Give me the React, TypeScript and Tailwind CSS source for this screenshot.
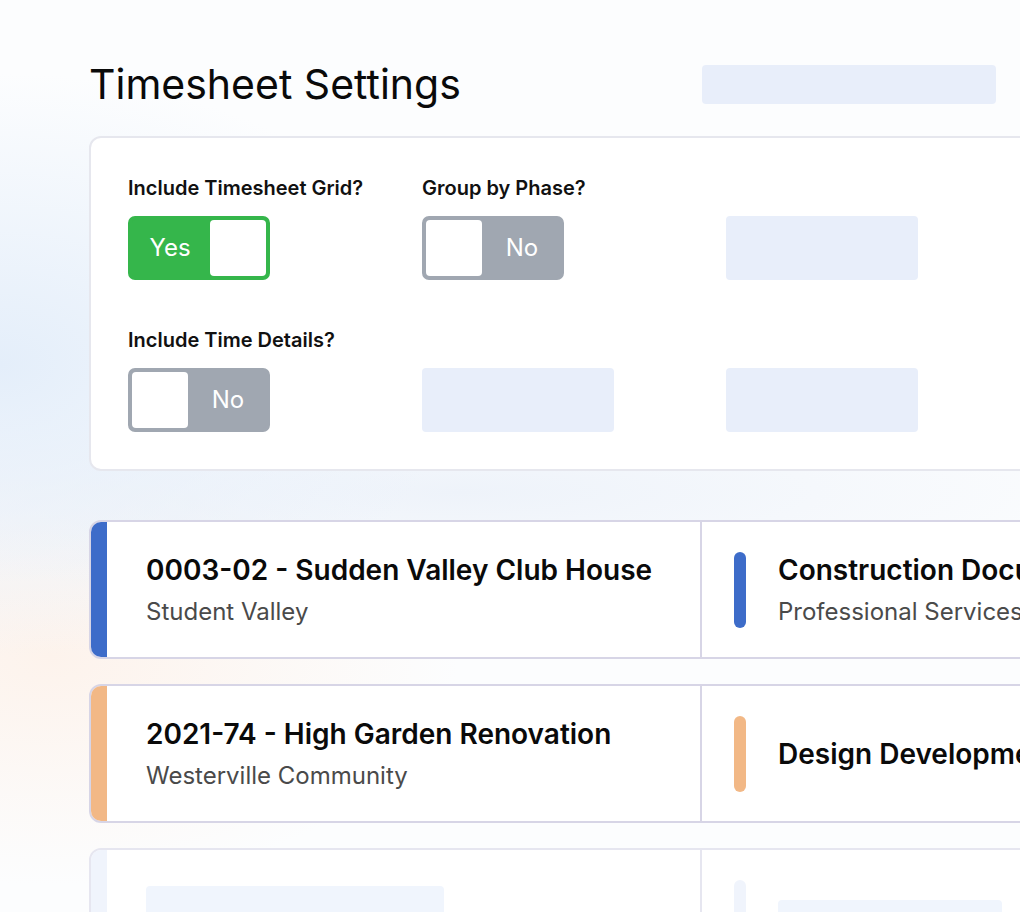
import React from 'react';

interface Project {
  color: string;
  title: string;
  client: string;
  phase: string;
  phaseSub?: string;
}

const projects: Project[] = [
  {
    color: 'bg-[#3d6cc9]',
    title: '0003-02 - Sudden Valley Club House',
    client: 'Student Valley',
    phase: 'Construction Documents',
    phaseSub: 'Professional Services',
  },
  {
    color: 'bg-[#f2b886]',
    title: '2021-74 - High Garden Renovation',
    client: 'Westerville Community',
    phase: 'Design Development',
  },
];

function Toggle({ on }: { on: boolean }) {
  if (on) {
    return (
      <div className="flex h-[64px] w-[142px] rounded-[7px] border-4 border-[#35b64b] bg-[#35b64b]">
        <div className="flex flex-1 items-center justify-center pr-[2px] text-[24px] text-white">Yes</div>
        <div className="w-[56px] rounded-[4px] bg-white" />
      </div>
    );
  }
  return (
    <div className="flex h-[64px] w-[142px] rounded-[7px] border-4 border-[#a0a7b1] bg-[#a0a7b1]">
      <div className="w-[56px] rounded-[4px] bg-white" />
      <div className="flex flex-1 items-center justify-center pl-[2px] text-[24px] text-white">No</div>
    </div>
  );
}

function Skeleton() {
  return <div className="h-[64px] w-[192px] rounded-[4px] bg-[#e8eefa]" />;
}

function Field({ label, children }: { label?: string; children: React.ReactNode }) {
  return (
    <div className="flex flex-col">
      <div className="mb-[16px] h-[24px] whitespace-nowrap text-[20px] font-semibold leading-[24px] text-[#111]">
        {label}
      </div>
      {children}
    </div>
  );
}

function ProjectRow({ p }: { p: Project }) {
  return (
    <div className="flex h-[139px] w-[1100px] overflow-hidden rounded-l-[12px] border-2 border-[#d7d5e6] bg-white">
      <div className={`w-[16px] ${p.color}`} />
      <div className="flex w-[595px] flex-col justify-center border-r-2 border-[#d7d5e6] pl-[39px]">
        <div className="text-[28px] font-semibold leading-[36px] text-[#0a0a0a]">{p.title}</div>
        <div className="mt-[9px] text-[24px] leading-[30px] text-[#4a4a4a]">{p.client}</div>
      </div>
      <div className="flex items-center pl-[32px]">
        <div className={`h-[76px] w-[12px] rounded-full ${p.color}`} />
        <div className="ml-[32px] flex flex-col whitespace-nowrap">
          <div className="text-[28px] font-semibold leading-[36px] text-[#0a0a0a]">{p.phase}</div>
          {p.phaseSub && (
            <div className="mt-[9px] text-[24px] leading-[30px] text-[#4a4a4a]">{p.phaseSub}</div>
          )}
        </div>
      </div>
    </div>
  );
}

export default function App() {
  return (
    <div
      className="h-[912px] w-[1020px] overflow-hidden bg-[#fcfdfe] bg-[radial-gradient(ellipse_45%_32%_at_0%_40%,#e4eefa,transparent),radial-gradient(ellipse_70%_12%_at_45%_54%,#eef3fa,transparent),radial-gradient(ellipse_40%_25%_at_5%_72%,#fdf3ec,transparent)] pl-[89px] pt-[56px]"
      style={{ fontFamily: 'Inter, "Noto Sans", sans-serif' }}
    >
      <div className="flex h-[56px] items-center">
        <h1 className="w-[613px] whitespace-nowrap text-[41px] font-normal leading-[56px] text-[#0a0a0a]">
          Timesheet Settings
        </h1>
        <div className="h-[39px] w-[294px] rounded-[4px] bg-[#e8eefa]" />
      </div>

      <div className="mt-[24px] w-[1100px] rounded-[12px] border-2 border-[#e6e7ee] bg-white pb-[37px] pl-[37px] pt-[38px]">
        <div className="grid grid-cols-[294px_304px_192px] gap-y-[48px]">
          <Field label="Include Timesheet Grid?">
            <Toggle on />
          </Field>
          <Field label="Group by Phase?">
            <Toggle on={false} />
          </Field>
          <Field>
            <Skeleton />
          </Field>
          <Field label="Include Time Details?">
            <Toggle on={false} />
          </Field>
          <Field>
            <Skeleton />
          </Field>
          <Field>
            <Skeleton />
          </Field>
        </div>
      </div>

      <div className="mt-[49px] flex flex-col gap-[25px]">
        {projects.map((p) => (
          <ProjectRow key={p.title} p={p} />
        ))}
        <div className="flex h-[139px] w-[1100px] overflow-hidden rounded-l-[12px] border-2 border-[#e6e6f0] bg-white">
          <div className="w-[16px] bg-[#f0f4fc]" />
          <div className="w-[595px] border-r-2 border-[#e6e6f0] pl-[39px] pt-[36px]">
            <div className="h-[40px] w-[298px] rounded-[4px] bg-[#f0f5fd]" />
          </div>
          <div className="flex pl-[32px] pt-[30px]">
            <div className="h-[76px] w-[12px] rounded-full bg-[#f0f4fc]" />
            <div className="ml-[32px] mt-[20px] h-[40px] w-[224px] rounded-[4px] bg-[#f0f5fd]" />
          </div>
        </div>
      </div>
    </div>
  );
}
